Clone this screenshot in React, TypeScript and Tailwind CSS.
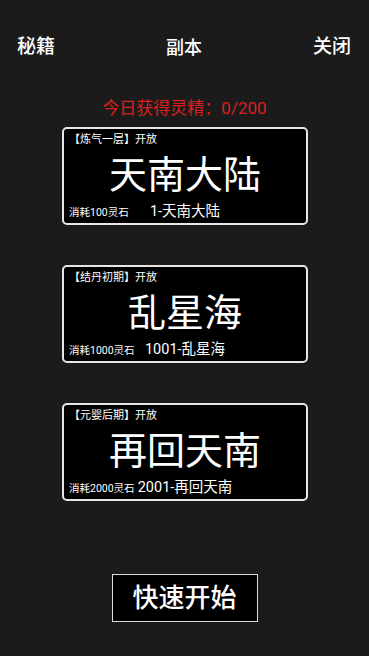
import React from "react";

const font = { fontFamily: 'Roboto, "Noto Sans CJK SC", "Noto Sans", sans-serif' };

const stages = [
  { tag: "【炼气一层】开放", title: "天南大陆", cost: "消耗100灵石", sub: "1-天南大陆" },
  { tag: "【结丹初期】开放", title: "乱星海", cost: "消耗1000灵石", sub: "1001-乱星海" },
  { tag: "【元婴后期】开放", title: "再回天南", cost: "消耗2000灵石", sub: "2001-再回天南" },
];

function Card({ tag, title, cost, sub }: { tag: string; title: string; cost: string; sub: string }) {
  return (
    <div className="w-[246px] h-[98px] rounded-[5px] border-2 border-[#e6e6e6] bg-black flex flex-col px-[5px] pt-[1px] pb-[1px]">
      <div className="text-[11px] leading-[20px] text-white">{tag}</div>
      <div className="flex-1 flex items-center justify-center text-[38px] leading-[44px] text-white -mt-[2px]">{title}</div>
      <div className="relative h-[20px] flex items-center justify-center">
        <span className="absolute left-0 top-0 text-[10.5px] leading-[22px] text-white">{cost}</span>
        <span className="text-[14.5px] leading-[20px] text-white">{sub}</span>
      </div>
    </div>
  );
}

export default function App() {
  return (
    <div className="w-[369px] h-[656px] bg-[#1b1b1b] flex flex-col items-center" style={font}>
      <div className="w-full flex items-center justify-between pl-[17px] pr-[18px] pt-[32px]">
        <span className="text-[19px] leading-[26px] font-medium text-white">秘籍</span>
        <span className="text-[18px] leading-[26px] font-medium text-white mt-[3px]">副本</span>
        <span className="text-[19px] leading-[26px] font-medium text-white">关闭</span>
      </div>
      <div className="mt-[36px] text-[17px] leading-[22px] text-[#dc1f1f]">今日获得灵精：0/200</div>
      <div className="mt-[8px] flex flex-col gap-[40px] pl-[1px]">
        {stages.map((s) => (
          <Card key={s.title} {...s} />
        ))}
      </div>
      <div className="mt-[73px] w-[146px] h-[48px] border border-[#dcdcdc] bg-black flex items-center justify-center text-[26px] font-medium text-white">
        快速开始
      </div>
    </div>
  );
}
